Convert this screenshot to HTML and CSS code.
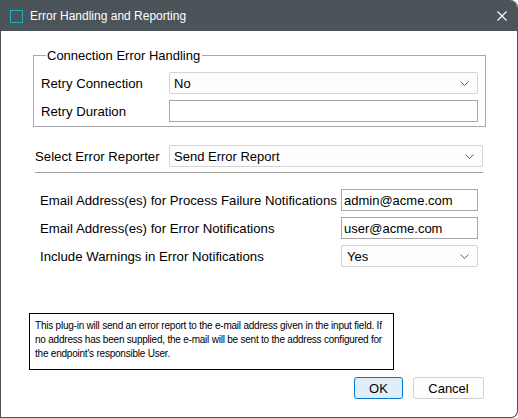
FILE: index.html
```html
<!DOCTYPE html>
<html lang="en">
<head>
    <meta charset="UTF-8">
    <title>Error Handling and Reporting</title>
    <link rel="stylesheet" href="styles.css">
</head>
<body>
    <div class="window">
        <div class="titlebar">
            <span class="app-icon"></span>
            <span class="title">Error Handling and Reporting</span>
            <svg class="close" width="10" height="10" viewBox="0 0 10 10">
                <path d="M0.5 0.5 L9.5 9.5 M9.5 0.5 L0.5 9.5" stroke="#ffffff" stroke-width="1.1" fill="none"/>
            </svg>
        </div>

        <div class="content">
            <fieldset class="group">
                <legend>Connection Error Handling</legend>
                <div class="row">
                    <label class="label">Retry Connection</label>
                    <div class="combo wide">
                        <span>No</span>
                        <svg class="chevron" width="9" height="5" viewBox="0 0 9 5"><path d="M0.5 0.5 L4.5 4.5 L8.5 0.5" stroke="#606060" fill="none"/></svg>
                    </div>
                </div>
                <div class="row">
                    <label class="label">Retry Duration</label>
                    <div class="field wide"></div>
                </div>
            </fieldset>

            <div class="row reporter">
                <label class="label">Select Error Reporter</label>
                <div class="combo">
                    <span>Send Error Report</span>
                    <svg class="chevron" width="9" height="5" viewBox="0 0 9 5"><path d="M0.5 0.5 L4.5 4.5 L8.5 0.5" stroke="#606060" fill="none"/></svg>
                </div>
            </div>
            <div class="separator"></div>

            <div class="email-rows">
                <div class="row">
                    <label class="label">Email Address(es) for Process Failure Notifications</label>
                    <div class="field small">admin@acme.com</div>
                </div>
                <div class="row">
                    <label class="label">Email Address(es) for Error Notifications</label>
                    <div class="field small">user@acme.com</div>
                </div>
                <div class="row">
                    <label class="label">Include Warnings in Error Notifications</label>
                    <div class="combo small">
                        <span>Yes</span>
                        <svg class="chevron" width="9" height="5" viewBox="0 0 9 5"><path d="M0.5 0.5 L4.5 4.5 L8.5 0.5" stroke="#606060" fill="none"/></svg>
                    </div>
                </div>
            </div>

            <div class="note">
                This plug-in will send an error report to the e-mail address given in the input field. If<br>
                no address has been supplied, the e-mail will be sent to the address configured for<br>
                the endpoint's responsible User.
            </div>

            <div class="buttons">
                <button class="btn primary">OK</button>
                <button class="btn">Cancel</button>
            </div>
        </div>
    </div>
</body>
</html>
```

FILE: styles.css
```css
html, body {
    margin: 0;
    padding: 0;
    background: #ffffff;
}

body {
    font-family: "Liberation Sans", Arial, sans-serif;
    font-size: 13px;
    color: #000000;
}

.window {
    width: 518px;
    height: 418px;
    box-sizing: border-box;
    border: 1px solid #4b5459;
    border-top: 0;
    border-radius: 0 8px 7px 0;
    overflow: hidden;
    display: flex;
    flex-direction: column;
    background: #ffffff;
}

.titlebar {
    height: 31px;
    flex: none;
    display: flex;
    align-items: center;
    background: #4b5459;
    color: #ffffff;
    padding-left: 9px;
}

.app-icon {
    width: 11px;
    height: 11px;
    border: 1.5px solid #1db1c2;
    margin-right: 7px;
    margin-top: 1px;
}

.title {
    font-size: 12px;
    flex: 1;
    margin-top: 1px;
}

.close {
    margin-right: 10px;
    margin-top: 1px;
}

.content {
    flex: 1;
    display: flex;
    flex-direction: column;
}

.group {
    margin: 16px 31px 0 32px;
    padding: 8px 7px 4px 7px;
    border: 1px solid #a9a9a9;
    display: flex;
    flex-direction: column;
    gap: 6px;
}

.group legend {
    padding: 0 2px 0 1px;
    margin-left: 5px;
    line-height: 17px;
}

.row {
    display: flex;
    align-items: center;
    height: 22px;
}

.label {
    font-size: 13.2px;
}

.group .row .label {
    width: 128px;
    flex: none;
}

.combo,
.field {
    box-sizing: border-box;
    height: 22px;
    display: flex;
    align-items: center;
    background: #ffffff;
}

.combo {
    border: 1px solid #d4d4d4;
    background: #fdfdfd;
    border-radius: 2px;
    padding: 0 8px 0 4px;
    justify-content: space-between;
    width: 314px;
}

.field {
    border: 1px solid #a6a6a6;
    padding: 0 2px;
}

.wide {
    width: 309px;
}

.small {
    width: 137px;
}

.reporter {
    margin: 18px 0 0 34px;
}

.reporter .label {
    width: 134px;
}

.separator {
    height: 1px;
    background: #a0a0a0;
    margin: 5px 34px 0 34px;
}

.email-rows {
    display: flex;
    flex-direction: column;
    gap: 6px;
    margin: 16px 0 0 39px;
}

.email-rows .label {
    width: 301px;
    flex: none;
}

.email-rows .combo {
    padding-left: 5px;
}

.note {
    box-sizing: border-box;
    width: 365px;
    height: 57px;
    margin: 46px 0 0 28px;
    padding: 5px 5px 0 5px;
    border: 1px solid #000000;
    font-size: 10px;
    letter-spacing: -0.22px;
    line-height: 14px;
    white-space: nowrap;
}

.buttons {
    display: flex;
    justify-content: flex-end;
    gap: 10px;
    margin: 7px 33px 0 0;
}

.btn {
    box-sizing: border-box;
    height: 22px;
    font-family: "Liberation Sans", Arial, sans-serif;
    font-size: 13px;
    color: #000000;
    border: 1px solid #d0d0d0;
    border-radius: 3px;
    background: #fdfdfd;
    padding: 0;
    width: 71px;
}

.btn.primary {
    width: 49px;
    border-color: #0078d4;
    background: #e0eef9;
}
```
